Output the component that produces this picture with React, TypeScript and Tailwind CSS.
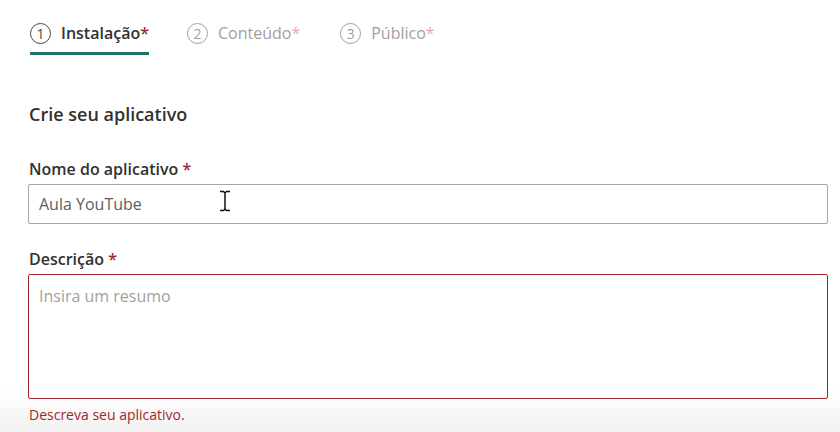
import React from 'react';

const STEPS = [
  { n: '1', label: 'Instalação', active: true, extra: '' },
  { n: '2', label: 'Conteúdo', active: false, extra: '' },
  { n: '3', label: 'Público', active: false, extra: 'ml-[2px]' },
];

function Step({ n, label, active, extra }: { n: string; label: string; active: boolean; extra: string }) {
  return (
    <div className={'flex flex-col pt-[23px] ' + extra}>
      <div className="flex items-center h-[21px]">
        <span
          className={
            'w-[21px] h-[21px] rounded-full border flex items-center justify-center text-[14px] leading-none ' +
            (active ? 'border-[#484644] text-[#484644]' : 'border-[#a19f9d] text-[#a19f9d]')
          }
        >
          {n}
        </span>
        <span
          className={
            'ml-[10px] text-[16px] leading-[21px] ' +
            (active ? 'font-semibold text-[#323130]' : 'text-[#a19f9d]')
          }
        >
          {label}
          <span className={active ? 'text-[#a4262c]' : 'text-[#e8a8ab]'}>*</span>
        </span>
      </div>
      <div className={'mt-[8px] h-[3px] ' + (active ? 'bg-[#1f6f6a]' : 'bg-transparent')} />
    </div>
  );
}

function IBeam() {
  return (
    <svg width="14" height="22" viewBox="0 0 14 22" className="absolute left-[189px] top-[5px]">
      <path d="M2 1.5h3.5L7 3l1.5-1.5H12M7 3v16M2 20.5h3.5L7 19l1.5 1.5H12" fill="none" stroke="#111" strokeWidth="1.5" />
    </svg>
  );
}

export default function App() {
  return (
    <div
      className="w-[840px] h-[432px] overflow-hidden bg-gradient-to-b from-white from-[90%] to-[#f2f2f2] text-[#323130]"
      style={{ fontFamily: '"Open Sans", "Noto Sans", sans-serif' }}
    >
      <div className="flex gap-[38px] pl-[30px]">
        {STEPS.map((s) => (
          <Step key={s.n} {...s} />
        ))}
      </div>

      <div className="pl-[28px] pr-[12px]">
        <h2 className="mt-[47px] text-[18px] font-semibold leading-[24px] pl-[1px]">Crie seu aplicativo</h2>

        <label className="block mt-[32px] text-[16px] font-semibold leading-[22px] pl-[1px]">
          Nome do aplicativo <span className="text-[#a4262c]">*</span>
        </label>
        <div className="relative mt-[4px] h-[40px] border border-[#a6a6a6] rounded-[2px] flex items-center px-[10px] text-[16px] text-[#605e5c]">
          Aula YouTube
          <IBeam />
        </div>

        <label className="block mt-[24px] text-[16px] font-semibold leading-[22px] pl-[1px]">
          Descrição <span className="text-[#a4262c]">*</span>
        </label>
        <div className="mt-[4px] h-[125px] border border-[#a4262c] rounded-[2px] px-[10px] pt-[10px] text-[16px] leading-[22px] text-[#a19f9d]">
          Insira um resumo
        </div>
        <p className="mt-[6px] pl-[1px] text-[14px] leading-[20px] text-[#a4262c]">Descreva seu aplicativo.</p>
      </div>
    </div>
  );
}
